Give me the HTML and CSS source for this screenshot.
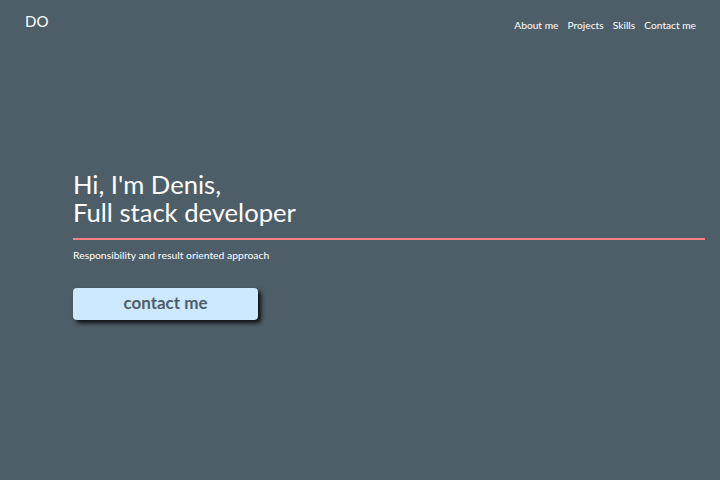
FILE: index.html
```html
<!DOCTYPE html>
<html lang="en">
<head>
<meta charset="utf-8">
<title>Denis</title>
<link rel="stylesheet" href="styles.css">
</head>
<body>
<header class="topbar">
  <a class="logo" href="#">DO</a>
  <nav class="nav">
    <a href="#">About me</a>
    <a href="#">Projects</a>
    <a href="#">Skills</a>
    <a href="#">Contact me</a>
  </nav>
</header>
<main class="hero">
  <h1 class="title">Hi, I'm Denis,<br>Full stack developer</h1>
  <p class="tagline">Responsibility and result oriented approach</p>
  <a class="cta" href="#">contact me</a>
</main>
</body>
</html>
```
FILE: styles.css
```css
* { box-sizing: border-box; }
html, body { margin: 0; height: 100%; }
body {
  background: #4d5e68;
  color: #fff;
  font-family: "Lato", sans-serif;
  overflow: hidden;
}
a { color: inherit; text-decoration: none; }
.topbar {
  display: flex;
  justify-content: space-between;
  align-items: flex-start;
  padding: 11px 24px 0 25px;
}
.logo { font-size: 15px; line-height: 20px; }
.nav {
  display: flex;
  gap: 9.2px;
  font-size: 10.2px;
  line-height: 14px;
  padding-top: 7px;
}
.hero { padding: 138px 15px 0 73px; }
.title {
  margin: 0;
  font-size: 25.6px;
  font-weight: 400;
  line-height: 28px;
  padding-bottom: 12px;
  border-bottom: 2px solid #fa8080;
}
.tagline { margin: 8px 0 0; font-size: 10.4px; line-height: 14px; }
.cta {
  display: block;
  width: 185px;
  height: 32px;
  margin-top: 26px;
  background: #cce9ff;
  color: #4d5e68;
  border-radius: 4px;
  box-shadow: 3px 3px 4px #0c0f11;
  font-size: 17px;
  font-weight: 700;
  line-height: 30px;
  text-align: center;
}
```
